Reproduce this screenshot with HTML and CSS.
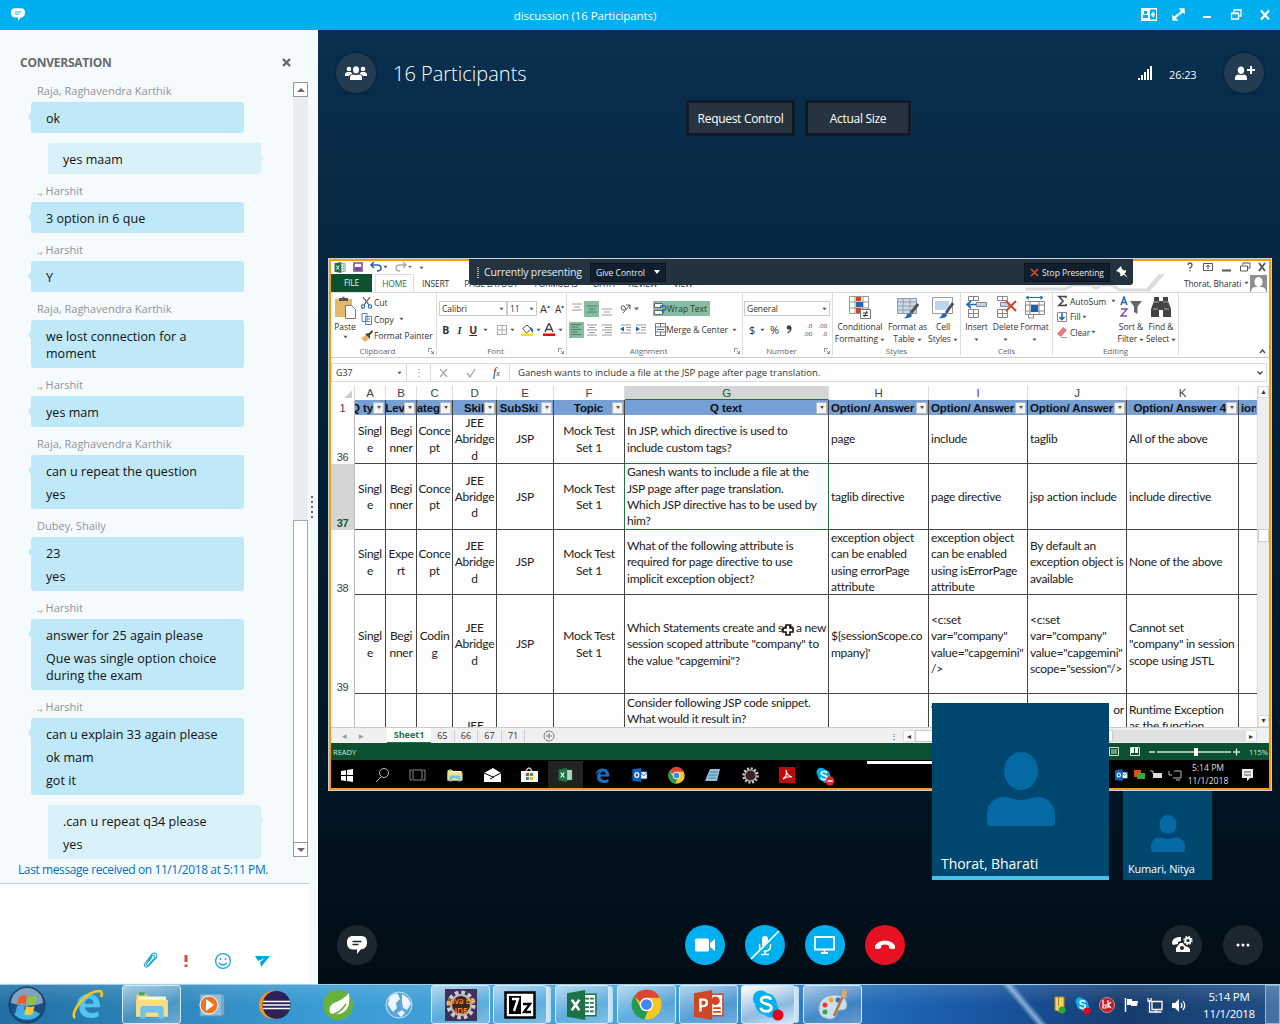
FILE: index.html
```html
<!DOCTYPE html>
<html lang="en">
<head>
<meta charset="utf-8">
<title>discussion (16 Participants)</title>
<link rel="stylesheet" href="styles.css">
</head>
<body>
<svg class="defs" width="0" height="0">
  <symbol id="person" viewBox="0 0 68 74"><ellipse cx="34" cy="19" rx="17" ry="19"/><path d="M0 68V63C0 52 7 45 17 45c7 0 9 3 17 3s10-3 17-3c10 0 17 8 17 18v7q0 4-4 4H4q-4 0-4-4z"/></symbol>
  <symbol id="chat" viewBox="0 0 20 18"><path fill="#fff" d="M6 0h8c4 0 6 2 6 6.500s-2 6-5 6.800h-1L10 18v-4.600H6c-4 0-6-2.500-6-6.900S2 0 6 0z"/><path d="M5.500 5.500h9M5.500 8.500h6" stroke="currentColor" stroke-width="1.300"/></symbol>
  <symbol id="chrome" viewBox="0 0 30 30"><circle cx="15" cy="15" r="14.500" fill="#f7c81e"/><path fill="#db4437" d="M15 .5A14.500 14.500 0 0 1 28 8.500H15a6.500 6.500 0 0 0-6 4L3 7A14.500 14.500 0 0 1 15 .5z"/><path fill="#219b57" d="M3 6.800 9.300 18a6.500 6.500 0 0 0 7 3.400L13 29.400A14.500 14.500 0 0 1 3 6.800z"/><circle cx="15" cy="15" r="6.500" fill="#fff"/><circle cx="15" cy="15" r="5.200" fill="#4285f4"/></symbol>
  <symbol id="skype" viewBox="0 0 30 30"><circle cx="9.500" cy="9" r="8.500" fill="#00aff0"/><circle cx="20" cy="21" r="8.500" fill="#00aff0"/><circle cx="15" cy="15" r="11.500" fill="#00aff0"/><path d="M20.500 10.500C19.500 8 17.500 7.500 15 7.500c-3 0-5.200 1.200-5.200 3.500 0 5 11 2.500 11 7.800 0 2.500-2.500 4-5.500 4-3.300 0-5.300-1.600-6-4" fill="none" stroke="#fff" stroke-width="3"/></symbol>
  <symbol id="excel" viewBox="0 0 28 28"><path fill="#fff" stroke="#1e7145" stroke-width="1.400" d="M14 4h13v20H14z"/><path stroke="#1e7145" stroke-width="1.600" d="M17 8h8M17 12h8M17 16h8M17 20h8" stroke-dasharray="3.500 1"/><path fill="#1e7145" d="M0 3 17 0v28L0 25z"/><path d="m4.500 9 7 10m0-10-7 10" stroke="#fff" stroke-width="2.400"/></symbol>
  <symbol id="folder" viewBox="0 0 32 26"><path fill="#e9c968" d="M1 3h10l2 3h16v18H1z"/><path fill="#3faf46" d="M4 1h5v3H4z"/><path fill="#fff7d3" d="M3 5h26v6H3z"/><path fill="#f7dd84" d="M1 8h30v16H1z"/><path fill="#6fc3ea" d="M5 26v-9q0-3 3-3h16q3 0 3 3v9h-5v-6H10v6z"/></symbol>
  <symbol id="gear" viewBox="0 0 30 30"><circle cx="15" cy="15" r="12.500" fill="none" stroke="#c9cdd2" stroke-width="4" stroke-dasharray="3.600 2.945"/><circle cx="15" cy="15" r="10" fill="#3a2420" stroke="#bbb" stroke-width="2"/></symbol>
  <symbol id="outlook" viewBox="0 0 24 22"><path fill="#fff" stroke="#0b66c3" d="M12 6h11v11H12z"/><path stroke="#0b66c3" fill="none" stroke-width="1.500" d="m13 8 5 4 5-5"/><path fill="#0b62bd" d="M0 2 14 0v22L0 20z"/><ellipse cx="7" cy="11" rx="3" ry="3.800" fill="none" stroke="#fff" stroke-width="2"/></symbol>
  <symbol id="edge" viewBox="0 0 30 30"><path fill="currentColor" d="M1 14C2 6 8 1 15 1c9 0 14 7 14 16H11c0 5 5 7 9 7 3 0 5-1 7-2v6c-3 2-6 2-9 2C9 30 4 25 4 18c0-5 2-8 6-11-4 1-7 4-9 7zm10-1h10c0-4-2-6-5-6s-5 3-5 6z"/></symbol>
  <symbol id="dd" viewBox="0 0 6 4"><path d="M.5.5h5L3 3.500z" fill="#555"/></symbol>
  <symbol id="launch" viewBox="0 0 6 6"><path d="M.5 4V.5H4M2.500 2.500l3 3M5.500 3v2.500H3" fill="none" stroke="#777" stroke-width=".8"/></symbol>
</svg>

<header class="titlebar">
  <svg class="tb-chat" width="14" height="13"><use href="#chat"/></svg>
  <span class="tb-title">discussion (16 Participants)</span>
  <svg class="tb-icons" width="136" height="16" viewBox="0 0 136 16">
    <rect x="1" y="2" width="16" height="13" fill="#fff"/><path d="M10 3.500h6v10h-6z" fill="#00aff0"/><path d="M4 5h3v3H4zM3 9h5v3H3z" fill="#00aff0"/><path d="M15 8.500h-3m1.800-2.500-2.300 2.500 2.300 2.500" stroke="#fff" stroke-width="1.300" fill="none"/>
    <path d="M38 2h7v7l-2.300-2.300-3 3-2-2 3-3zM39 15h-7V8l2.300 2.300 3-3 2 2-3 3z" fill="#fff" stroke="#00aff0" stroke-width=".6"/>
    <path fill="#fff" d="M63 10h8v2h-8z"/>
    <path d="M91.500 7.500h7v5.500h-7zM91.500 7h7M94 6V4h7v6h-2" stroke="#fff" stroke-width="1.300" fill="none"/>
    <path d="m121 4.500 8 9m0-9-8 9" stroke="#fff" stroke-width="2.300"/>
  </svg>
</header>

<main class="main">
  <aside class="chat">
    <div class="chat-head"><h2>CONVERSATION</h2><svg width="9" height="9" viewBox="0 0 9 9"><path d="m1 1 7 7m0-7-7 7" stroke="#666" stroke-width="2.400"/></svg></div>
    <div class="chat-body">
      <div class="messages">
        <div class="name">Raja, Raghavendra Karthik</div>
        <div class="bubble"><p>ok</p></div>
        <div class="bubble mine"><p>yes maam</p></div>
        <div class="name">., Harshit</div>
        <div class="bubble"><p>3 option in 6 que</p></div>
        <div class="name">., Harshit</div>
        <div class="bubble"><p>Y</p></div>
        <div class="name">Raja, Raghavendra Karthik</div>
        <div class="bubble"><p>we lost connection for a<br>moment</p></div>
        <div class="name">., Harshit</div>
        <div class="bubble"><p>yes mam</p></div>
        <div class="name">Raja, Raghavendra Karthik</div>
        <div class="bubble"><p>can u repeat the question</p><p>yes</p></div>
        <div class="name">Dubey, Shaily</div>
        <div class="bubble"><p>23</p><p>yes</p></div>
        <div class="name">., Harshit</div>
        <div class="bubble"><p>answer for 25 again please</p><p>Que was single option choice<br>during the exam</p></div>
        <div class="name">., Harshit</div>
        <div class="bubble"><p>can u explain 33 again please</p><p>ok mam</p><p>got it</p></div>
        <div class="bubble mine"><p>.can u repeat q34 please</p><p>yes</p></div>
      </div>
      <div class="scroll"><i class="up"></i><b></b><i class="down"></i></div>
      <div class="grip"></div>
    </div>
    <div class="last">Last message received on 11/1/2018 at 5:11 PM.</div>
    <div class="compose">
      <svg width="130" height="18" viewBox="0 0 130 18" fill="none" stroke="#1aa7e0">
        <path d="M4.500 9.500 10 4c1.700-1.700 4 .3 2.500 2.200l-5.800 6.600c-1.200 1.300-3-.2-1.800-1.600L10 5.500M4.500 9.500l-1.300 1.500c-2.200 2.600.9 5.500 3.300 3.200L13.700 6.400c1.700-2 1.300-3.600.3-4.600s-3-.9-4.300.6L4.500 9.500" stroke-width="1.100"/>
        <path d="M44 3v7M44 12.500v2.500" stroke="#dc4a2c" stroke-width="3"/>
        <circle cx="81" cy="9" r="7.400" stroke-width="1.300"/><path d="M77 11q4 4 8 0M78.500 6v2M83.500 6v2" stroke-width="1.400"/>
        <path d="M113 4h15l-9 11-1-5 5-4-7 3z" fill="#00a5e3" stroke="none"/>
      </svg>
    </div>
  </aside>

  <section class="call">
    <div class="call-head">
      <span class="circle"><svg width="22" height="14" viewBox="0 0 22 14" fill="#fff"><circle cx="4" cy="3" r="2.300"/><circle cx="18" cy="3" r="2.300"/><ellipse cx="11" cy="3.800" rx="3" ry="3.600"/><path d="M0 10V8.500Q0 6 3 6h3q1.500 2 1 2-2 .5-3 2zM22 10V8.500Q22 6 19 6h-3q-1.500 2-1 2 2 .5 3 2zM5 14v-2.500Q5 8.500 8 8.500q3 1 6 0 3 0 3 3V14z"/></svg></span>
      <h1>16 Participants</h1>
      <svg class="signal" width="15" height="15" viewBox="0 0 15 15" fill="#fff"><path d="M0 12h2v2H0zM3 9h2v5H3zM6 6h2v8H6zM9 3h2v11H9zM12 0h2v14h-2z"/></svg>
      <span class="timer">26:23</span>
      <span class="circle"><svg width="21" height="14" viewBox="0 0 21 14" fill="#fff"><ellipse cx="7" cy="4.200" rx="3.200" ry="3.700"/><path d="M1 14v-2q0-3 3-3.500 3 1 6 0 3 .5 3 3.500v2zM16 0h2v3h3v2h-3v3h-2V5h-3V3h3z"/></svg></span>
    </div>
    <div class="actions"><button>Request Control</button><button>Actual Size</button></div>

    <div class="share">
      <div class="presenting">
        <span class="dots"></span><span class="pt">Currently presenting</span>
        <span class="give">Give Control <svg width="6" height="4" viewBox="0 0 6 4"><path d="M0 0h6L3 4z" fill="#fff"/></svg></span>
        <span class="stop"><svg width="9" height="9" viewBox="0 0 9 9"><path d="m1 1 7 7m0-7-7 7" stroke="#e8481c" stroke-width="1.600"/></svg>Stop Presenting</span>
        <svg width="12" height="12" viewBox="0 0 12 12"><path fill="#fff" d="M5 0 0 5l3 1 1.500 2-.5 2 2 0 1.500-1.500L12 12 8.500 7.500 10 6V4L8 4.500 6 3z"/></svg>
      </div>
      <div class="xl-title">
        <svg width="100" height="12" viewBox="0 0 100 12"><svg x="3" y="1" width="12" height="11"><use href="#excel"/></svg>
          <path d="M23 2h8v8h-8z" fill="#fff" stroke="#7b4a9b" stroke-width="1.600"/><path d="M24 6h6v4h-6z" fill="#7b4a9b"/>
          <path d="M41 4h5q4 0 4 3t-4 3M43 1l-3 3 3 3" stroke="#2d62a8" stroke-width="1.600" fill="none"/><use href="#dd" x="52" y="4" width="5" height="4"/>
          <path d="M74 4h-5q-4 0-4 3t4 3M72 1l3 3-3 3" stroke="#aaa" stroke-width="1.400" fill="none"/><use href="#dd" x="77" y="4" width="4" height="4"/><use href="#dd" x="88" y="5" width="5" height="4"/></svg>
        <svg width="84" height="12" viewBox="0 0 84 12" fill="none" stroke="#555"><path d="M6 4q0-2 2-2t2 2-2 3v1M8 9v1.500" stroke-width="1.300"/><path d="M21.500 2.500h9v7h-9zM26 8V4m-2 2 2-2 2 2"/><path d="M40 9.500h9" stroke-width="2"/><path d="M58.500 5h7v5h-7zM61 4V2h7v5h-2"/><path d="m77 2 6 8m0-8-6 8" stroke-width="1.800"/></svg>
      </div>
      <nav class="xl-tabs">
        <svg class="circuit" width="190" height="18" viewBox="0 0 190 18" fill="none" stroke="#dcdcdc" stroke-width="3"><path d="M0 15h40l8-4h18M76 11h12l6 5h28l13-15M112 16h12l14-16"/><circle cx="71" cy="11" r="3"/></svg>
        <b>FILE</b><b class="on">HOME</b><span>INSERT</span><span>PAGE LAYOUT</span><span>FORMULAS</span><span>DATA</span><span>REVIEW</span><span>VIEW</span>
        <em>Thorat, Bharati <svg width="5" height="4"><use href="#dd"/></svg></em>
        <svg class="avatar" width="17" height="17" viewBox="0 0 17 17"><path fill="#8f8f8f" d="M0 0h17v17H0z"/><ellipse cx="8.500" cy="7" rx="4" ry="5" fill="#fff"/><path fill="#fff" d="M1 17q0-5 5-5h5q5 0 5 5z"/></svg></nav>
      <div class="ribbon">
        <div class="grp g-clip">
          <div class="gc">
            <div class="big paste"><svg width="21" height="23" viewBox="0 0 21 23"><path fill="#e4b768" d="M0 3h17v18H0z"/><path fill="#555" d="M4 5V2h3q1.500-3 3 0h3v3z"/><path d="M10.500 9.500h6l4 4v9h-10z" fill="#fff" stroke="#777"/></svg>Paste<svg width="5" height="4"><use href="#dd"/></svg></div>
            <div class="stack">
              <span><svg width="12" height="12" viewBox="0 0 12 12" fill="none" stroke="#555" stroke-width="1.200"><path d="M2 0l6 8M9 0 3 8"/><g stroke="#2d74b5"><circle cx="2" cy="9.500" r="1.700"/><circle cx="9" cy="9.500" r="1.700"/></g></svg>Cut</span>
              <span><svg width="12" height="12" viewBox="0 0 12 12" fill="#fff" stroke="#5a82b0"><path d="M1 .5h5v8H1zM4.500 3.500h6v8h-6zM6 6h3M6 8.500h3"/></svg>Copy &nbsp;<svg width="5" height="4"><use href="#dd"/></svg></span>
              <span><svg width="12" height="12" viewBox="0 0 12 12"><path fill="#e4b768" d="M0 8l5-3 3 4-4 3z"/><path fill="#444" d="M4 4l4-1 3-3 1 2-3 3v4z"/></svg>Format Painter</span>
            </div>
          </div>
          <label>Clipboard</label><svg class="ln" width="6" height="6"><use href="#launch"/></svg>
        </div>
        <div class="grp g-font">
          <div class="row r1"><span class="box w67">Calibri<svg width="5" height="4"><use href="#dd"/></svg></span><span class="box w30">11<svg width="5" height="4"><use href="#dd"/></svg></span><span class="big-a">A<sup>▴</sup></span><span class="sm-a">A<sup>▾</sup></span></div>
          <div class="row r2"><b>B</b><b><i>I</i></b><b><u>U</u></b>
            <svg width="86" height="15" viewBox="0 0 86 15"><use href="#dd" x="3" y="6" width="5" height="4"/><path d="M17.500 3.500h9v9h-9zM22 3.500v9M17.500 8h9" fill="none" stroke="#aaa"/><use href="#dd" x="30" y="6" width="5" height="4"/><path d="M42.500 6.500 47 3l4 4-4.500 4z" fill="#fff" stroke="#555"/><path fill="#2d74b5" d="M50 5l3 2v4l-2-2z"/><path fill="#ffe800" d="M41 11.500h12V14H41z"/><use href="#dd" x="56" y="6" width="5" height="4"/><path d="M65 10l3.500-8h1L73 10M66.500 7.500h5" stroke="#444" stroke-width="1.400" fill="none"/><path fill="#f00" d="M63 11.500h12V14H63z"/><use href="#dd" x="78" y="6" width="5" height="4"/></svg></div>
          <label>Font</label><svg class="ln" width="6" height="6"><use href="#launch"/></svg>
        </div>
        <div class="grp g-align">
          <div class="row r1"><svg width="86" height="16" viewBox="0 0 86 16" stroke="#999"><path fill="#86bfa0" stroke="none" d="M17 0h15v16H17z"/><path d="M5 3h10M7 6h6M5 9h10"/><path stroke="#557a66" d="M20 5h10M22 8h6M20 11h10"/><path d="M35 8h10M37 11h6M35 14h10"/><path stroke="#555" fill="none" d="M56 12l7-8m-4 0h4v4M54 6q2-3 4 0t-2 3q-2 0-2-3"/><use href="#dd" x="67" y="6" width="5" height="4"/></svg>
            <span class="wrap"><svg width="13" height="14" viewBox="0 0 13 14" fill="#fff" stroke="#666"><path d="M.5 1.500h8v4h-8zM.5 8.500h8v4h-8z"/><path d="M6 4h4q2 0 2 2t-3 3M10 7l-2 2 2 2" fill="none" stroke="#2468b3" stroke-width="1.300"/></svg>Wrap Text</span></div>
          <div class="row r2"><svg width="88" height="16" viewBox="0 0 88 16" stroke="#999"><path fill="#86bfa0" stroke="none" d="M2 0h15v16H2z"/><path stroke="#557a66" d="M4 2.500h10M4 5h7M4 7.500h10M4 10h7M4 12.500h10"/><path d="M20 3h10M22 5.500h6M20 8h10M22 10.500h6M20 13h10M35 3h10M38 5.500h7M35 8h10M38 10.500h7M35 13h10M54 3h10M59 5.500h5M59 8h5M54 11h10M69 3h10M74 5.500h5M74 8h5M69 11h10"/><path fill="#2468b3" stroke="none" d="M53 7l4-2.500v5zM73 7l-4-2.500v5z"/></svg><svg width="11" height="13" viewBox="0 0 11 13" fill="none" stroke="#777"><path d="M.5.5h10v12H.5zM.5 4h10M.5 9h10M5.500 0v4M5.500 9v4"/><path stroke="#2468b3" d="M2 6.500h7"/></svg>Merge &amp; Center &nbsp;<svg width="5" height="4"><use href="#dd"/></svg></div>
          <label>Alignment</label><svg class="ln" width="6" height="6"><use href="#launch"/></svg>
        </div>
        <div class="grp g-num">
          <div class="row r1"><span class="box w86">General<svg width="5" height="4"><use href="#dd"/></svg></span></div>
          <div class="row r2 num"><span>$</span><svg width="5" height="4"><use href="#dd"/></svg><span>%</span>
            <svg class="comma" width="6" height="9" viewBox="0 0 6 9"><circle cx="3" cy="2.500" r="2.300" fill="#444"/><path d="M5 2.500q0 4-3.500 5.500" stroke="#444" stroke-width="1.300" fill="none"/></svg>
            <div class="dec"><small>.0</small><small>.00</small></div><div class="dec"><small>.00</small><small>.0</small></div></div>
          <label>Number</label><svg class="ln" width="6" height="6"><use href="#launch"/></svg>
        </div>
        <div class="grp g-style">
          <div class="gc">
            <div class="big"><svg width="22" height="23" viewBox="0 0 22 23"><path d="M.5.5h19v17H.5zM.5 6h19M.5 12h19M6 0v17M14 0v17" fill="#fff" stroke="#999"/><path fill="#d5451c" d="M7 1h5v4H7zM7 12h5v5H7z"/><path fill="#2468b3" d="M7 6h7v5H7z"/><path fill="#fff" stroke="#777" d="M11.500 13.500h10v9h-10z"/><path stroke="#333" d="M14 17h5M14 19.500h5M18 15l-3 6"/></svg>Conditional<br>Formatting <svg width="5" height="4"><use href="#dd"/></svg></div>
            <div class="big"><svg width="22" height="23" viewBox="0 0 22 23"><path fill="#c7dcf2" stroke="#999" d="M.5 2.500h19v15H.5zM.5 6h19M.5 10h19M.5 14h19M6 2v15M13 2v15"/><path stroke="#555" stroke-width="3" d="M21 8l-7 9"/><path fill="#2468b3" d="M6 22q3 0 4-4l4-1 1 3q-3 3-9 2z"/></svg>Format as<br>Table <svg width="5" height="4"><use href="#dd"/></svg></div>
            <div class="big"><svg width="22" height="23" viewBox="0 0 22 23"><path fill="#fff" stroke="#999" d="M.5 1.500h20v16H.5z"/><path fill="#bcd5ef" d="M3 5h14v9H3z"/><path stroke="#555" stroke-width="3" d="M21 7l-7 10"/><path fill="#2468b3" d="M6 22q3 0 4-4l4-1 1 3q-3 3-9 2z"/></svg>Cell<br>Styles <svg width="5" height="4"><use href="#dd"/></svg></div>
          </div><label>Styles</label>
        </div>
        <div class="grp g-cells">
          <div class="gc">
            <div class="big"><svg width="22" height="23" viewBox="0 0 22 23" fill="#fff" stroke="#888"><path d="M2.500.5h10v4h-10zM7.500 0v4M2.500 13.500h10v8h-10zM2.500 17.500h10M7.500 13v8"/><path fill="#bcd5ef" d="M10.500 6.500h10v4h-10z"/><path d="M10 8.500H1M5 5 1 8.500 5 12" fill="none" stroke="#2468b3" stroke-width="1.700"/></svg>Insert<svg width="5" height="8" viewBox="0 -3 6 8"><path d="M.5.500h5L3 3.500z" fill="#555"/></svg></div>
            <div class="big"><svg width="22" height="23" viewBox="0 0 22 23" fill="#fff" stroke="#888"><path d="M2.500.5h10v4h-10zM7.500 0v4M2.500 13.500h10v8h-10zM2.500 17.500h10M7.500 13v8"/><path fill="#bcd5ef" d="M5.500 6.500h8v4h-8z"/><path d="m11 5 10 10m0-10L11 15" stroke="#d5451c" stroke-width="2"/></svg>Delete<svg width="5" height="8" viewBox="0 -3 6 8"><path d="M.5.500h5L3 3.500z" fill="#555"/></svg></div>
            <div class="big"><svg width="22" height="23" viewBox="0 0 22 23" fill="#fff" stroke="#888"><path d="M1.500 5.500h19v13h-19zM1.500 9h19M1.500 15h19M6 5v13M15 5v13M4.500 18v4h5v-4"/><path d="M7 9h7v7H7z" fill="#1f5fa8" stroke="none"/><path d="M3 1.500h15M5 0 2 1.500 5 3.500M16 0l3 1.500-3 2" stroke="#2468b3" fill="none"/></svg>Format<svg width="5" height="8" viewBox="0 -3 6 8"><path d="M.5.500h5L3 3.500z" fill="#555"/></svg></div>
          </div><label>Cells</label>
        </div>
        <div class="grp g-edit">
          <div class="gc">
            <div class="stack">
              <span><svg width="12" height="12" viewBox="0 0 12 12"><path d="M9 3V1.500H2L6 6l-4 4.500h7V9" fill="none" stroke="#444" stroke-width="1.600"/></svg>AutoSum &nbsp;<svg width="5" height="4"><use href="#dd"/></svg></span>
              <span><svg width="12" height="12" viewBox="0 0 12 12" fill="none"><path stroke="#888" d="M.5 1.500h9v9h-9z"/><path stroke="#2468b3" stroke-width="1.600" d="M5 2v6M2.500 6 5 8.500 7.500 6"/></svg>Fill <svg width="5" height="4"><use href="#dd"/></svg></span>
              <span><svg width="12" height="12" viewBox="0 0 12 12"><path fill="#e8788a" d="M0 8 6 1l4 3-6 7z"/><path stroke="#999" d="M4 11.500h6"/></svg>Clear <svg width="5" height="4"><use href="#dd"/></svg></span>
            </div>
            <div class="big"><svg width="22" height="23" viewBox="0 0 22 23"><path d="m1 9 3-8 3 8M2 6.500h4" stroke="#2468b3" stroke-width="1.500" fill="none"/><path d="M1 13h6l-6 7h6" stroke="#8a4aa8" stroke-width="1.500" fill="none"/><path fill="#666" d="M10 5h12l-4.500 5.500V18L14 16v-5.500z"/></svg>Sort &amp;<br>Filter <svg width="5" height="4"><use href="#dd"/></svg></div>
            <div class="big"><svg width="22" height="23" viewBox="0 0 22 23"><path fill="#444" d="M4 1h5v4h4V1h5v4l3 8v8h-8v-7H9v7H1v-8l3-8z"/><path stroke="#aaa" d="M3 13h5M14 13h5M4 6h5M13 6h5"/></svg>Find &amp;<br>Select <svg width="5" height="4"><use href="#dd"/></svg></div>
          </div><label>Editing</label>
        </div>
        <svg class="collapse" width="7" height="5" viewBox="0 0 7 5"><path d="M1 4l2.500-3L6 4" fill="none" stroke="#444" stroke-width="1.300"/></svg>
      </div>
      <div class="fbar">
        <span class="nm">G37<svg width="5" height="4"><use href="#dd"/></svg></span><span class="cl">⋮</span>
        <span class="fx"><svg width="44" height="10" viewBox="0 0 44 10" fill="none" stroke="#aaa" stroke-width="1.400"><path d="m2 1 7 8m0-8L2 9M29 5l3 4 5-8"/></svg><i>f<small>x</small></i></span>
        <span class="ft">Ganesh wants to include a file at the JSP page after page translation.</span><svg width="6" height="4" viewBox="0 0 6 4"><path d="m.5.500 2.500 2.500L5.500.5" fill="none" stroke="#444" stroke-width="1.300"/></svg>
      </div>
      <div class="sheet">
        <div class="grid">
          <span class="ch corner"></span><span class="ch">A</span><span class="ch">B</span><span class="ch">C</span><span class="ch">D</span><span class="ch">E</span><span class="ch">F</span><span class="ch sel">G</span><span class="ch">H</span><span class="ch">I</span><span class="ch">J</span><span class="ch">K</span><span class="ch"></span>
          <span class="rh">1</span><span class="th end"><q>Q ty</q><i></i></span><span class="th"><q>Lev</q><i></i></span><span class="th end"><q>Categ</q><i></i></span><span class="th end"><q>Skil</q><i></i></span><span class="th"><q>SubSki</q><i></i></span><span class="th full"><q>Topic</q><i></i></span><span class="th full"><q>Q text</q><i></i></span><span class="th start"><q>Option/ Answer</q><i></i></span><span class="th start"><q>Option/ Answer</q><i></i></span><span class="th start"><q>Option/ Answer</q><i></i></span><span class="th end"><q>Option/ Answer 4</q><i></i></span><span class="th start"><q>ion/</q></span>
          <span class="rh">36</span><span class="c">Singl<br>e</span><span class="c">Begi<br>nner</span><span class="c">Conce<br>pt</span><span class="c">JEE<br>Abridge<br>d</span><span class="c">JSP</span><span class="c">Mock Test<br>Set 1</span><span>In JSP, which directive is used to<br>include custom tags?</span><span>page</span><span>include</span><span>taglib</span><span>All of the above</span><span></span>
          <span class="rh sel">37</span><span class="c">Singl<br>e</span><span class="c">Begi<br>nner</span><span class="c">Conce<br>pt</span><span class="c">JEE<br>Abridge<br>d</span><span class="c">JSP</span><span class="c">Mock Test<br>Set 1</span><span class="active">Ganesh wants to include a file at the<br>JSP page after page translation.<br>Which JSP directive has to be used by<br>him?</span><span>taglib directive</span><span>page directive</span><span>jsp action include</span><span>include directive</span><span></span>
          <span class="rh">38</span><span class="c">Singl<br>e</span><span class="c">Expe<br>rt</span><span class="c">Conce<br>pt</span><span class="c">JEE<br>Abridge<br>d</span><span class="c">JSP</span><span class="c">Mock Test<br>Set 1</span><span>What of the following attribute is<br>required for page directive to use<br>implicit exception object?</span><span>exception object<br>can be enabled<br>using errorPage<br>attribute</span><span>exception object<br>can be enabled<br>using isErrorPage<br>attribute</span><span>By default an<br>exception object is<br>available</span><span>None of the above</span><span></span>
          <span class="rh">39</span><span class="c">Singl<br>e</span><span class="c">Begi<br>nner</span><span class="c">Codin<br>g</span><span class="c">JEE<br>Abridge<br>d</span><span class="c">JSP</span><span class="c">Mock Test<br>Set 1</span><span>Which Statements create and set a new<br>session scoped attribute "company" to<br>the value "capgemini"?</span><span>${sessionScope.co<br>mpany}'</span><span>&lt;c:set<br>var="company"<br>value="capgemini"<br>/&gt;</span><span>&lt;c:set<br>var="company"<br>value="capgemini"<br>scope="session"/&gt;</span><span>Cannot set<br>"company" in session<br>scope using JSTL</span><span></span>
          <span class="rh"></span><span class="t"></span><span class="t"></span><span class="t"></span><span class="t c low">JEE</span><span class="t"></span><span class="t"></span><span class="t">Consider following JSP code snippet.<br>What would it result in?</span><span class="t"></span><span class="t mid">V</span><span class="t mid right">or</span><span class="t mid">Runtime Exception<br>as the function</span><span class="t"></span>
        </div>
        <div class="vs"><i>▴</i><b></b><i>▾</i></div>
        <svg class="cursor" width="12" height="12" viewBox="0 0 12 12"><path d="M4 1h4v3h3v4H8v3H4V8H1V4h3z" fill="#fff" stroke="#111" stroke-width="1.600"/></svg>
      </div>
      <div class="stabs"><span class="ar">◂</span><span class="ar">▸</span><b>Sheet1</b><span>65</span><span>66</span><span>67</span><span>71</span><svg width="12" height="12" viewBox="0 0 12 12" fill="none" stroke="#777"><circle cx="6" cy="6" r="5"/><path d="M3 6h6M6 3v6"/></svg><div class="hs"><u>⋮</u><i>◂</i><b></b><em></em><i>▸</i></div></div>
      <div class="status"><span>READY</span><svg width="141" height="16" viewBox="0 0 141 16" fill="none" stroke="#cfe3d8"><path d="M2.500 3.500h9v8h-9zM5 5v5M7 5v5M9 5v5M23.500 3.500h9v8h-9z"/><path fill="#fff" stroke="none" d="M24 4h3v5h-3zM28 4h3v5h-3z"/><path d="M42 8h6M50 8h74M126 8h7M129.500 4.500v7" stroke-width="1.300"/><path d="M89 4v8" stroke="#fff" stroke-width="4"/></svg><span class="pct">115%</span></div>
      <div class="rtask">
        <svg width="504" height="28" viewBox="0 0 504 28">
          <path fill="#222" d="M217 0h35v27h-35z"/>
          <path fill="#fff" d="M10 10l5-.8V14h-5zM16 9l6-1v6h-6zM10 15h5v5l-5-.8zM16 15h6v6l-6-1z"/>
          <circle cx="53" cy="12" r="4.500" fill="none" stroke="#bbb"/><path d="m50 16-5 5" stroke="#bbb"/>
          <path d="M82 9h9v10h-9zM81 9h-2v10h2M92 9h2v10h-2" fill="none" stroke="#888"/>
          <use href="#folder" x="116" y="7" width="16" height="14"/>
          <path fill="#fff" d="M153 12l9-5 8 5v9h-17z"/><path d="M153 12l9 4 8-4M163 16l-4 2" stroke="#000" fill="none"/>
          <path fill="#fff" d="M190 10h17v11h-17z"/><path d="M195 10q3-6 6 0" fill="none" stroke="#ccc" stroke-width="1.300"/><path fill="#e33" d="M195 12h3v3h-3z"/><path fill="#3a3" d="M199 12h3v3h-3z"/><path fill="#28c" d="M195 16h3v3h-3z"/><path fill="#fa0" d="M199 16h3v3h-3z"/>
          <use href="#excel" x="227" y="7" width="15" height="14"/>
          <g color="#1a6fc4"><use href="#edge" x="264" y="7" width="15" height="15"/></g>
          <use href="#outlook" x="301" y="7" width="16" height="14"/><use href="#chrome" x="337" y="6" width="17" height="17"/>
          <path fill="#8fc3dd" d="M379 8h10l-3 12h-12z"/><path stroke="#4f7d92" d="M379 11h8M378 14h8M377 17h8"/>
          <use href="#gear" x="411" y="6" width="17" height="17"/><path fill="#c00a0a" d="M448 6h16v16h-16z"/><path d="M452 18q5-4 3-9 1 6 6 7-5-1-9 2z" fill="none" stroke="#fff" stroke-width="1.200"/>
          <use href="#skype" x="485" y="6" width="16" height="17"/><circle cx="499" cy="20" r="4.500" fill="#e22"/><path d="M496.500 20h5" stroke="#fff" stroke-width="1.500"/>
        </svg>
        <div class="rbar"></div>
        <svg width="74" height="28" viewBox="0 0 74 28"><use href="#outlook" x="3" y="8" width="13" height="12"/><path fill="#e2491d" d="M22 9h7v7h-7z"/><path fill="#3a3" d="M25 12h8v6h-8z"/><path fill="#ddd" d="M41 12h9v5h-9z"/><path d="M38 10h3v3M57 10v4h3M62 10h7v7h-8M64 19h4" stroke="#bbb" fill="none"/></svg>
        <div class="rclock">5:14 PM<br>11/1/2018</div>
        <svg width="14" height="14" viewBox="0 0 14 14"><path fill="#eee" d="M1 1h11v9H9l-3 3v-3H1z"/><path d="M3 4h7M3 7h7" stroke="#555"/></svg>
      </div>
    </div>

    <div class="tile big-tile"><svg width="68" height="74" fill="#036aa4"><use href="#person"/></svg><span>Thorat, Bharati</span></div>
    <div class="tile small-tile"><svg width="34" height="37" fill="#036aa4"><use href="#person"/></svg><span>Kumari, Nitya</span></div>

    <div class="controls">
      <span class="circle dk"><svg width="20" height="18" color="#1c262e"><use href="#chat"/></svg></span>
      <div class="mid-ctl">
        <span class="circle bl"><svg width="20" height="14" viewBox="0 0 20 14" fill="#fff"><rect width="14" height="13" y=".5" rx="1.500"/><path d="m15 5 5-4v12l-5-4z"/></svg></span>
        <span class="circle bl"><svg width="40" height="40" viewBox="0 0 40 40" fill="none" stroke="#fff"><rect x="17" y="11" width="6" height="12" rx="3" fill="#fff" stroke="none"/><path d="M14.500 19v2q0 5 5.500 5t5.500-5v-2M20 26v3M16 29.500h8" stroke-width="1.600"/><path d="M8 34 34 7" stroke="#00aff0" stroke-width="4"/><path d="M6 34 34 6" stroke-width="1.600"/></svg></span>
        <span class="circle bl"><svg width="21" height="18" viewBox="0 0 21 18" fill="none" stroke="#fff" stroke-width="1.800"><path d="M1 1h19v12.500H1zM10.500 14v3M7 17h7"/></svg></span>
        <span class="circle rd"><svg width="22" height="10" viewBox="0 0 22 10"><path fill="#fff" d="M1 7q0-2.500 3-4.500 7-4 14 0 3 2 3 4.500v1.500q-3 1-6-.5 0-3-1-3-3-1-6 0-1 0-1 3-3 1.500-6 .5z"/></svg></span>
      </div>
      <div class="right-ctl"><span class="circle dk"><svg width="22" height="18" viewBox="0 0 22 18"><path fill="#fff" d="M1 7Q1 2 8 1l2 0 0 4-3 1 0 2-5 1zM5 16v-4l4-5h3q1 3 5 4l2 2v3z"/><circle cx="11" cy="12" r="2" fill="#1c262e"/><circle cx="17" cy="4.500" r="2.600" fill="none" stroke="#fff" stroke-width="2"/><circle cx="17" cy="4.500" r="4" fill="none" stroke="#fff" stroke-width="1.300" stroke-dasharray="1.600 1.540"/></svg></span><span class="circle dk"><svg width="14" height="4" viewBox="0 0 14 4" fill="#fff"><circle cx="2" cy="2" r="1.500"/><circle cx="7" cy="2" r="1.500"/><circle cx="12" cy="2" r="1.500"/></svg></span></div>
    </div>
  </section>
</main>

<footer class="taskbar">
  <span class="ti orb"><svg width="38" height="38" viewBox="0 0 38 38"><circle cx="19" cy="19" r="18" fill="#1b4f83" stroke="#14395e"/><path d="M3 17a16 15 0 0 1 32 0q-16 6-32 0z" fill="#9bb7cc" opacity=".8"/><path d="M6 28a16 14 0 0 0 26 0q-13-9-26 0z" fill="#38b6ea"/><path fill="#f0592a" d="M11 11q4-3 8-1l-1.500 8q-4-2-8.500 1z"/><path fill="#8cc63f" d="M20 10q4 2 9-1l-2 9q-4 2-8.500.500z"/><path fill="#4aa6e0" d="M9 20q4-2 8 0l-2 8q-4-2-8 0z"/><path fill="#fdc72f" d="M18 20q4 2 8.500 0l-2 8q-4 2-8 .500z"/></svg></span>
  <span class="ti ie"><svg width="32" height="32" viewBox="0 0 32 32"><g color="#4fc5f2"><use href="#edge" x="4" y="4" width="25" height="25"/></g><path d="M3 29C-3 24 14 2 27 2c4 0 3 4 2 6" fill="none" stroke="#f5c518" stroke-width="2.600"/></svg></span>
  <span class="ti btn"><svg width="34" height="28"><use href="#folder"/></svg></span>
  <span class="ti wmp"><svg width="28" height="26" viewBox="0 0 28 26"><path fill="#8dbfdf" stroke="#5d92b8" d="M2 2h22v22H2zM24 3h2v20h-2"/><circle cx="11" cy="13" r="9" fill="#f0751f" stroke="#fff"/><path fill="#fff" d="m8 7 8 6-8 6z"/></svg></span>
  <span class="ti ecl"><svg width="34" height="32" viewBox="0 0 34 32"><circle cx="15" cy="16" r="14" fill="#f7941e"/><circle cx="18.500" cy="16" r="14" fill="#2c2255"/><path d="M5 12.500h27M5 16h27M5 19.500h27" stroke="#fff" stroke-width="1.700"/></svg></span>
  <span class="ti spr"><svg width="32" height="32" viewBox="0 0 32 32"><circle cx="16" cy="16" r="15" fill="#68b13c"/><path fill="#fff" d="M27 4q2 14-5 19-6 4-14 1-2-7 4-10 9-3 15-10z"/><path d="M6 27q12-2 18-12" stroke="#68b13c" stroke-width="1.500" fill="none"/></svg></span>
  <span class="ti glb"><svg width="28" height="30" viewBox="0 0 28 30"><circle cx="14" cy="15" r="13" fill="#5aa6dc" stroke="#cbe4f5"/><path fill="#eaf5fc" d="M4 8q5-6 9-4l2 5-4 4 1 5-4 4-5-7zM17 4l6 4 3 6-4 6-4-2-1-6zM12 23l5-3 3 3-4 4z"/></svg></span>
  <span class="ti btn"><svg width="32" height="32" viewBox="0 0 32 32"><path fill="#40305a" d="M0 0h32v32H0z"/><use href="#gear" x="1" y="1" width="30" height="30"/><text class="jee" x="16" y="15">Java EE</text><text class="jee" x="16" y="25">IDE</text></svg></span>
  <span class="ti btn st z7"><svg width="32" height="28" viewBox="0 0 32 28"><path fill="#fff" stroke="#000" stroke-width="2.500" d="M1.500 1.500h29v25h-29z"/><path fill="#000" d="M5 5h12v18H5z"/><path d="M8 8h6l-4 12" stroke="#fff" stroke-width="2.400" fill="none"/><path d="M19 13h7l-6 8h7" stroke="#000" stroke-width="2.400" fill="none"/></svg></span>
  <span class="ti btn st xls"><svg width="30" height="30"><use href="#excel"/></svg></span>
  <span class="ti btn chr"><svg width="31" height="31"><use href="#chrome"/></svg></span>
  <span class="ti btn"><svg width="30" height="30" viewBox="0 0 28 28"><path fill="#fff" stroke="#d04727" stroke-width="1.400" d="M14 4h13v20H14z"/><circle cx="20" cy="10" r="4" fill="#d04727"/><path stroke="#d04727" stroke-width="1.600" d="M18 17h7M18 20.500h7"/><path fill="#d04727" d="M0 3 17 0v28L0 25z"/><path d="M6 20V9h3q3 0 3 3t-3 3H6" stroke="#fff" stroke-width="2.200" fill="none"/></svg></span>
  <span class="ti btn st lit"><svg width="32" height="32" viewBox="0 0 32 32"><use href="#skype" width="28" height="30"/><circle cx="26" cy="26" r="5.500" fill="#e8001c"/></svg></span>
  <span class="ti btn pnt"><svg width="34" height="32" viewBox="0 0 34 32"><path fill="#c9dff0" stroke="#7fa6c5" d="M3 17Q5 7 17 6t14 9q0 7-6 6-4 0-4 4-2 6-9 5Q1 28 3 17z"/><circle cx="9" cy="16" r="2.500" fill="#e33"/><circle cx="15" cy="11" r="2.500" fill="#f7a81b"/><circle cx="22" cy="11" r="2.500" fill="#3b6fd0"/><circle cx="9" cy="23" r="2.500" fill="#3a3"/><path d="m18 27 9-20" stroke="#b3793a" stroke-width="2.600"/><path fill="#d6a86a" d="m25 8 2-8 4 2-1 8z"/></svg></span>
  <div class="tray">
    <svg width="142" height="22" viewBox="0 0 142 22">
      <path fill="#f0d264" stroke="#a98a1e" d="M9 3h9v13l-4 2-5-2z"/><path stroke="#a98a1e" d="M12.500 3v9"/><circle cx="16" cy="16" r="3.500" fill="#2eaa2e"/>
      <use href="#skype" x="29" y="3" width="15" height="15"/><circle cx="41" cy="17" r="3.500" fill="#e8001c"/>
      <circle cx="61" cy="11" r="7.500" fill="#b9202b" stroke="#d88"/><path d="M57 6v8h3v-3h-3M62 6v8M62 11l3-3m-3 3 3 3" fill="none" stroke="#fff" stroke-width="1.200"/>
      <path d="M79.500 4v14" stroke="#fff" stroke-width="1.500"/><path fill="#fff" d="M81 5h5v2h6l-1 5h-6v-1h-4z"/>
      <path d="M106 7.500h10v8h-10zM102 4v3h3V4M103.500 7v11h12M110 16v2" fill="none" stroke="#fff" stroke-width="1.300"/>
      <path fill="#fff" d="M126 9h3l4-4v13l-4-4h-3z"/><path d="M135 9q2 2.500 0 5M137 7q3.500 4.500 0 9" fill="none" stroke="#fff" stroke-width="1.200"/>
    </svg>
    <div class="clock">5:14 PM<br>11/1/2018</div>
    <span class="peek"></span>
  </div>
</footer>
</body>
</html>
```
FILE: styles.css
```css
* { box-sizing: border-box; }
body { margin: 0; width: 1280px; height: 1024px; overflow: hidden; display: flex; flex-direction: column; font-family: "Open Sans", "Noto Sans", sans-serif; font-size: 12px; }
svg { display: block; flex: none; }
.defs { position: absolute; }
h1, h2, p { margin: 0; font-weight: 400; }

.titlebar { height: 30px; flex: none; background: #00aff0; color: #fff; display: grid; grid-template-columns: 56px 1fr 140px; align-items: center; }
.tb-chat { margin: -2px 0 0 11px; color: #00aff0; }
.tb-title { text-align: center; font-size: 11.500px; letter-spacing: -.1px; padding-right: 26px; }
.tb-icons { margin-top: -2px; }

.main { height: 954px; flex: none; display: flex; }
.chat { width: 318px; background: #f5fafd; display: flex; flex-direction: column; border-right: 1px solid #fdfeff; }
.chat-head { height: 52px; display: flex; align-items: center; justify-content: space-between; padding: 12px 26px 0 20px; }
.chat-head h2 { font-size: 12px; font-weight: 700; color: #66696d; letter-spacing: -.25px; }
.chat-body { height: 777px; display: flex; overflow: hidden; }
.messages { width: 293px; padding: 2px 0 0 31px; }
.name { height: 18px; line-height: 14px; padding-left: 6px; font-size: 11px; color: #8f9599; margin-top: 10px; }
.name:first-child { margin-top: 0; }
.bubble { position: relative; width: 213px; padding: 8px 14px 6px 15px; background: #bfe8f9; border-radius: 3px; color: #111; font-size: 12.500px; letter-spacing: .05px; display: flex; flex-direction: column; gap: 6px; }
.bubble p { line-height: 17px; white-space: nowrap; }
.bubble::before { content: ""; position: absolute; left: -3px; top: 11px; border: 4px solid transparent; border-left: 0; border-right: 3px solid #bfe8f9; }
.mine { margin: 10px 0 0 17px; background: #dbf1fa; }
.mine::before { left: auto; right: -3px; border-right: 0; border-left: 3px solid #dbf1fa; }
.scroll { width: 15px; height: 775px; background: #e8edf0; display: flex; flex-direction: column; }
.scroll i { height: 15px; border: 1px solid #999; background: #fff; display: grid; place-items: center; }
.scroll i::after { content: ""; border: 4px solid transparent; border-top: 0; border-bottom: 4px solid #666; }
.scroll .down::after { transform: rotate(180deg); }
.scroll b { margin-top: auto; height: 322px; background: #fff; border: 1px solid #a5a8aa; border-bottom: 0; }
.grip { width: 2px; height: 22px; margin: 414px 0 0 3px; background: repeating-linear-gradient(#666 0 2px, transparent 2px 5px); }
.last { height: 24px; line-height: 22px; padding-left: 18px; color: #0072c6; font-size: 12px; letter-spacing: -.4px; white-space: nowrap; }
.compose { width: 309px; height: 100px; background: #fff; border-top: 1px solid #bad4e2; display: flex; justify-content: flex-end; align-items: flex-end; padding: 0 37px 13px 0; }

.call { position: relative; width: 962px; background: linear-gradient(#093050, #062640 25%, #021828 70%, #010d16); color: #fff; display: flex; flex-direction: column; }
.call-head { height: 66px; display: flex; align-items: center; padding: 20px 16px 0 18px; }
.circle { width: 40px; height: 40px; border-radius: 50%; background: #233c51; display: grid; place-items: center; flex: none; box-shadow: 0 0 0 2px rgba(0,20,40,.25); }
.call-head h1 { font-size: 20px; font-weight: 300; margin-left: 17px; flex: 1; }
.signal { margin-top: 1px; }
.timer { font-size: 11px; width: 29px; margin: 3px 26px 0 16px; letter-spacing: -.1px; }
.actions { display: flex; gap: 10px; padding: 4px 0 0 368px; }
.actions button { height: 36px; border: 3px solid #101b27; background: #27343f; color: #fff; font: 12px "Open Sans", sans-serif; letter-spacing: -.3px; padding: 0; width: 109px; }
.actions button + button { width: 106px; }

.share { position: relative; width: 944px; height: 533px; margin: 122px 0 0 10px; border: 1px solid #c9d2da; box-shadow: inset 0 0 0 2px #f39c14; padding: 2px; background: #fff; color: #333; font-size: 8.500px; display: flex; flex-direction: column; }
.presenting { position: absolute; z-index: 1; left: 140px; top: 0; width: 664px; height: 26px; background: #22323f; border-radius: 0 0 3px 3px; color: #e6ecf0; display: flex; align-items: center; padding: 0 5px 0 8px; }
.dots { width: 2px; height: 11px; background: repeating-linear-gradient(#bbb 0 1px, transparent 1px 2px); }
.pt { font-size: 10.500px; letter-spacing: -.15px; margin-left: 5px; width: 106px; white-space: nowrap; }
.give, .stop { height: 19px; background: #111f2c; border: 1px solid #0b151f; display: flex; align-items: center; padding: 0 5px; white-space: nowrap; }
.give { width: 76px; justify-content: space-between; font-size: 8.500px; }
.stop { margin: 0 6px 0 auto; gap: 3px; width: 86px; letter-spacing: -.05px; }
.xl-title { height: 14px; display: flex; justify-content: space-between; padding-right: 3px; }
.xl-tabs { height: 18px; display: flex; align-items: center; position: relative; }
.xl-tabs b, .xl-tabs span { font-size: 8.500px; letter-spacing: -.2px; text-align: center; white-space: nowrap; font-weight: 500; position: relative; }
.xl-tabs b:first-of-type { width: 41px; height: 18px; line-height: 18px; background: #0b5130; color: #e5efe9; }
.xl-tabs .on { width: 39px; line-height: 18px; height: 19px; margin-left: 3px; color: #217346; border: 1px solid #ddd; border-bottom: 0; background: #fff; }
.xl-tabs .on + span { width: 43px; }
.xl-tabs span:nth-of-type(2) { width: 68px; }
.xl-tabs span:nth-of-type(3) { width: 62px; }
.xl-tabs span:nth-of-type(4) { width: 34px; }
.xl-tabs span:nth-of-type(5) { width: 44px; }
.xl-tabs span:nth-of-type(6) { width: 36px; }
.circuit { position: absolute; right: 54px; top: 0; }
.xl-tabs em { font-style: normal; display: flex; align-items: center; gap: 3px; width: 66px; margin-left: auto; white-space: nowrap; letter-spacing: -.15px; position: relative; }
.avatar { margin-right: 2px; position: relative; }
.ribbon { height: 66px; border-top: 1px solid #ddd; border-bottom: 1px solid #ccc; display: flex; margin-bottom: 4px; position: relative; flex: none; }
.grp { position: relative; border-right: 1px solid #ddd; height: 62px; display: flex; flex-direction: column; padding-top: 2px; white-space: nowrap; letter-spacing: -.05px; }
.grp label { font-size: 8px; color: #666; text-align: center; position: absolute; left: 0; right: 12px; bottom: -1px; line-height: 11px; }
.ln { position: absolute; right: 2px; bottom: 1px; }
.g-clip { width: 106px; } .g-font { width: 130px; } .g-align { width: 176px; } .g-num { width: 90px; } .g-style { width: 128px; } .g-cells { width: 92px; } .g-edit { width: 126px; }
.g-style label, .g-cells label, .g-edit label { right: 0; }
.g-num { padding-left: 1px; }
.gc { display: flex; }
.big { text-align: center; line-height: 12px; margin-top: 1px; }
.big > svg:first-child { margin: 0 auto 2px; }
.big svg:last-child { display: inline-block; }
.paste { width: 28px; } .paste svg:last-child { display: block; margin: 2px auto 0; }
.stack { display: flex; flex-direction: column; gap: 5px; padding: 2px 0 0 2px; }
.stack span { display: flex; align-items: center; height: 11.500px; gap: 1px; }
.row { display: flex; align-items: center; height: 17px; }
.r1 { margin-top: 5px; } .r2 { margin-top: 4px; }
.g-font .r1, .g-font .r2 { padding-left: 2px; }
.box { height: 15px; border: 1px solid #ccc; display: flex; align-items: center; justify-content: space-between; padding: 0 2px; }
.w67 { width: 68px; } .w30 { width: 30px; } .w86 { width: 86px; }
.big-a { font-size: 11px; margin-left: 3px; width: 15px; } .sm-a { font-size: 10px; }
.row sup { font-size: 6px; color: #2468b3; line-height: 0; }
.g-font .r2 b { width: 14.600px; text-align: center; font-size: 10.500px; } .g-font .r2 b i { font-family: "Liberation Serif", serif; }
.wrap { background: #86bfa0; height: 15px; width: 57px; display: flex; align-items: center; padding-left: 1px; }
.num { font-size: 11px; } .num span:first-child { width: 16px; text-align: center; } .num > svg { margin-right: 5px; } .num .comma { margin: 0 5px 0 7px; }
.dec { width: 15px; display: flex; flex-direction: column; align-items: flex-end; }
.dec small { font-size: 6px; line-height: 8px; }
.g-style .big { width: 54px; } .g-style .big + .big { width: 41px; } .g-style .big + .big + .big { width: 30px; }
.g-cells .big { width: 31px; } .g-cells .big svg:last-child { display: block; margin: 2px auto 0; }
.g-cells .big { margin-left: -2px; } .g-cells .big:first-child { margin-left: 0; }
.g-edit .stack { width: 63px; padding-left: 4px; } .g-edit .stack span { height: 10.500px; } .g-edit .stack { padding-top: 1px; } .g-edit .big { width: 30px; }
.collapse { position: absolute; right: 3px; bottom: 3px; }
.fbar { height: 19px; display: flex; align-items: center; font-size: 9.550px; border: 1px solid #ddd; margin: 1px 2px 4px 0; padding-right: 3px; flex: none; }
.nm { width: 75px; height: 17px; border-right: 1px solid #ddd; display: flex; align-items: center; justify-content: space-between; padding: 0 4px; font-size: 8.800px; }
.cl { width: 23px; text-align: center; color: #999; }
.fx { width: 80px; height: 17px; border: 1px solid #ddd; border-width: 0 1px; display: flex; align-items: center; padding-left: 7px; gap: 11px; }
.fx i { font: italic 12px "Liberation Serif", serif; } .fx small { font-size: 8px; }
.ft { margin: 0 0 0 8px; flex: 1; white-space: nowrap; }
.sheet { height: 341px; display: flex; position: relative; flex: none; }
.grid { width: 927px; height: 341px; overflow: hidden; display: grid; grid-template-columns: 24px 31px 31px 36px 44px 57px 71px 204px 100px 99px 99px 112px 19px; grid-template-rows: 14px 15px 49px 66px 65px 99px 60px; font: 12px/16.300px Lato, "Open Sans", sans-serif; letter-spacing: -.25px; color: #222; background: #fdfdfd; }
.grid > span { border-right: 1px solid #444; border-bottom: 1px solid #444; padding: 1px 0 0 2px; display: flex; align-items: center; white-space: nowrap; overflow: hidden; min-width: 0; }
.grid > .c { padding: 1px 0 0; justify-content: center; text-align: center; }
.grid > .ch { border: 0; border-right: 1px solid #ddd; font: 11.500px "Liberation Sans", sans-serif; justify-content: center; padding: 0; color: #444; }
.grid > .ch.sel { background: #d5d5d5; color: #0f5c37; border-bottom: 1px solid #217346; }
.grid > .corner { background: linear-gradient(135deg, transparent 60%, #ccc 60%) 11px 3px / 10px 9px no-repeat; }
.grid > .rh { border: 0; border-right: 1px solid #bbb; font: 11px/13px "Liberation Sans", sans-serif; align-items: flex-end; justify-content: center; padding: 0 0 0 0; color: #444; }
.grid > .rh.sel { background: #d5d5d5; color: #0f5c37; font-weight: 700; }
.grid > .th { background: #769fd3; border-bottom: 0; font: 700 11.500px "Liberation Sans", sans-serif; letter-spacing: -.1px; color: #111; padding: 0 1px 0 0; }
.th q { quotes: none; flex: 1; min-width: 0; overflow: hidden; display: flex; justify-content: center; }
.end q { justify-content: flex-end; } .grid > .start { padding-left: 2px; } .start q { justify-content: flex-start; }
.th i { width: 11px; height: 12px; background: #f3f3f3; border: 1px solid #bbb; display: grid; place-items: center; flex: none; }
.full i { margin-left: -11px; }
.th i::after { content: ""; border: 2.500px solid transparent; border-bottom: 0; border-top: 3px solid #555; }
.grid > .active { border: 1px solid #217346; padding-left: 2px; margin: -1px 0 0 -1px; }
.grid > .t { align-items: flex-start; } .grid > .low { padding-top: 24px; } .grid > .mid { padding-top: 8px; } .grid > .right { justify-content: flex-end; padding-right: 2px; }
.vs { width: 12px; background: #eee; display: flex; flex-direction: column; border-left: 1px solid #ddd; }
.vs i { height: 12px; background: #fff; border: 1px solid #ddd; font: 8px/10px "DejaVu Sans", sans-serif; text-align: center; }
.vs b { height: 13px; background: #fff; border: 1px solid #ccc; margin: 131px 0 auto; }
.cursor { position: absolute; left: 451px; top: 238px; }
.stabs { height: 16px; background: #f0f0f0; display: flex; align-items: center; font-size: 9px; border-top: 1px solid #ccc; flex: none; }
.stabs span { width: 23.600px; text-align: center; border-right: 1px solid #ccc; line-height: 12px; }
.stabs .ar { width: 16px; border: 0; color: #999; padding-left: 10px; } .stabs .ar + .ar { width: 40px; padding: 0 12px 0 0; }
.stabs b { width: 44px; height: 16px; background: #fff; color: #217346; text-align: center; border-bottom: 2px solid #217346; line-height: 14px; }
.stabs > svg { margin-left: 18px; }
.hs { margin-left: auto; width: 379px; display: flex; align-items: center; font-size: 8px; }
.hs u { text-decoration: none; width: 13px; } .hs i { font-style: normal; width: 12px; height: 12px; line-height: 10px; background: #fff; border: 1px solid #ddd; text-align: center; } .hs em { width: 132px; height: 12px; background: #e0e0e0; }
.stabs .hs b { border: 1px solid #ccc; width: 198px; height: 12px; }
.status { height: 17px; background: #0b5130; color: #d9e8df; display: flex; align-items: center; font-size: 7.500px; padding: 0 1px 0 2px; flex: none; }
.status svg { margin-left: auto; } .status .pct { width: 20px; text-align: right; }
.rtask { height: 28px; flex: 1; background: #000; display: flex; align-items: center; color: #ddd; padding-top: 1px; }
.rbar { align-self: flex-start; width: 66px; height: 3px; background: #fff; margin: 0 179px 0 32px; flex: none; }
.rclock { text-align: center; line-height: 13px; width: 60px; margin: 1px 3px 0 -8px; font-size: 8.600px; flex: none; }

.tile { position: absolute; z-index: 2; background: #00476f; }
.tile svg { margin: 0 auto; }
.big-tile { left: 614px; top: 673px; width: 177px; height: 177px; border-bottom: 4px solid #4cc1e8; padding: 49px 0 0; }
.big-tile span { display: block; margin: 28px 0 0 9px; font-size: 14px; line-height: 20px; letter-spacing: -.05px; }
.small-tile { left: 805px; top: 761px; width: 89px; height: 89px; padding-top: 24px; }
.small-tile span { display: block; margin: 9px 0 0 5px; font-size: 11px; line-height: 16px; white-space: nowrap; letter-spacing: -.2px; }
.controls { margin-top: auto; height: 59px; display: flex; justify-content: space-between; padding: 0 17px 19px 19px; }
.controls .circle { box-shadow: none; }
.mid-ctl, .right-ctl { display: flex; gap: 20px; } .right-ctl { gap: 21px; } .mid-ctl { margin-left: 50px; }
.controls .dk { background: #1c262e; } .controls .bl { background: #00aff0; } .controls .rd { background: #e81123; }

.taskbar { height: 40px; flex: none; display: flex; align-items: center; border-top: 1px solid #9ed0ee; background: linear-gradient(rgba(255,255,255,.12), transparent 50%), linear-gradient(50deg, transparent 44%, rgba(190,225,250,.65) 50%, transparent 56%) 985px 0 / 80px 40px no-repeat, linear-gradient(90deg, #2270a3, #3a9cd3 25%, #4aa4dc 48%, #2e82c8 60%, #1c61b0 72%, #184f96 80%, #163c6e 88%, #204f86 100%); }
.ti { display: grid; place-items: center; height: 39px; flex: none; }
.orb { width: 53px; } .ie { width: 69px; } .wmp { width: 63px; } .ecl { width: 64px; } .spr { width: 61px; } .glb { width: 62px; margin-right: 1px; }
.btn { width: 59px; border: 1px solid #d5ebf8; border-radius: 3px; background: linear-gradient(160deg, rgba(255,255,255,.55), rgba(255,255,255,.12) 60%, rgba(255,255,255,.3)); margin-right: 3px; }
.wmp { margin-left: -4px; }
.btn.st { width: 54px; margin-right: 8px; box-shadow: 3px 0 0 -1px rgba(255,255,255,.2), 4px 0 0 -1px #bfdff2, 6px 0 0 -2px #bfdff2; }
.btn.lit { background: linear-gradient(160deg, #fff, rgba(255,255,255,.45) 60%, #d5ebf8); }
.jee { font: 600 8.500px "Open Sans", sans-serif; fill: #ff8a1e; text-anchor: middle; letter-spacing: -.2px; }
.tray { margin-left: auto; display: flex; align-items: center; height: 39px; }
.clock { width: 72px; margin-left: 5px; text-align: center; color: #fff; font-size: 11.500px; line-height: 17px; letter-spacing: -.3px; }
.peek { width: 15px; height: 39px; border: 1px solid #8fb7dc; background: rgba(160,200,235,.3); }
```
